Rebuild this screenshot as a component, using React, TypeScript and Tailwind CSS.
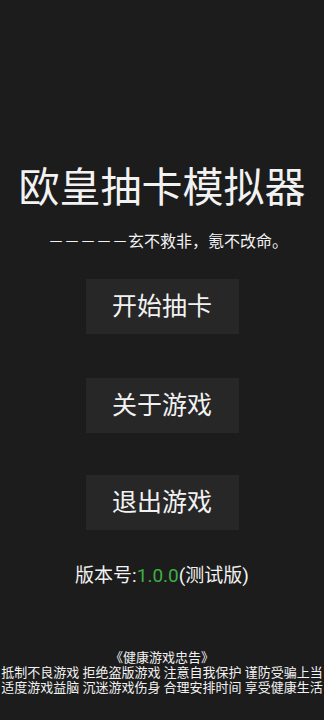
import React from "react";

const font = { fontFamily: 'Roboto, "Noto Sans CJK SC", "Noto Sans", sans-serif' };

const MenuButton: React.FC<{ label: string; className?: string }> = ({ label, className = "" }) => (
  <button
    className={`w-[153px] h-[55px] bg-[#272727] text-[#f2f2f2] text-[25px] leading-none flex items-center justify-center ${className}`}
  >
    {label}
  </button>
);

export default function App() {
  return (
    <div className="w-[324px] h-[720px] bg-[#1c1c1c] text-[#f2f2f2] flex flex-col items-center overflow-hidden" style={font}>
      <h1 className="mt-[168px] text-[41px] leading-[41px] whitespace-nowrap">欧皇抽卡模拟器</h1>
      <p className="mt-[25px] pl-[12px] text-[16px] leading-[16px] whitespace-nowrap">－－－－－玄不救非，氪不改命。</p>

      <MenuButton label="开始抽卡" className="mt-[29px]" />
      <MenuButton label="关于游戏" className="mt-[44px]" />
      <MenuButton label="退出游戏" className="mt-[42px]" />

      <p className="mt-[36px] text-[19px] leading-[19px] whitespace-nowrap">
        版本号:<span className="text-[#3cb043]">1.0.0</span>(测试版)
      </p>

      <div className="mt-[65px] text-[13px] leading-[15px] text-center whitespace-nowrap">
        <div>《健康游戏忠告》</div>
        <div>抵制不良游戏 拒绝盗版游戏 注意自我保护 谨防受骗上当</div>
        <div>适度游戏益脑 沉迷游戏伤身 合理安排时间 享受健康生活</div>
      </div>
    </div>
  );
}
